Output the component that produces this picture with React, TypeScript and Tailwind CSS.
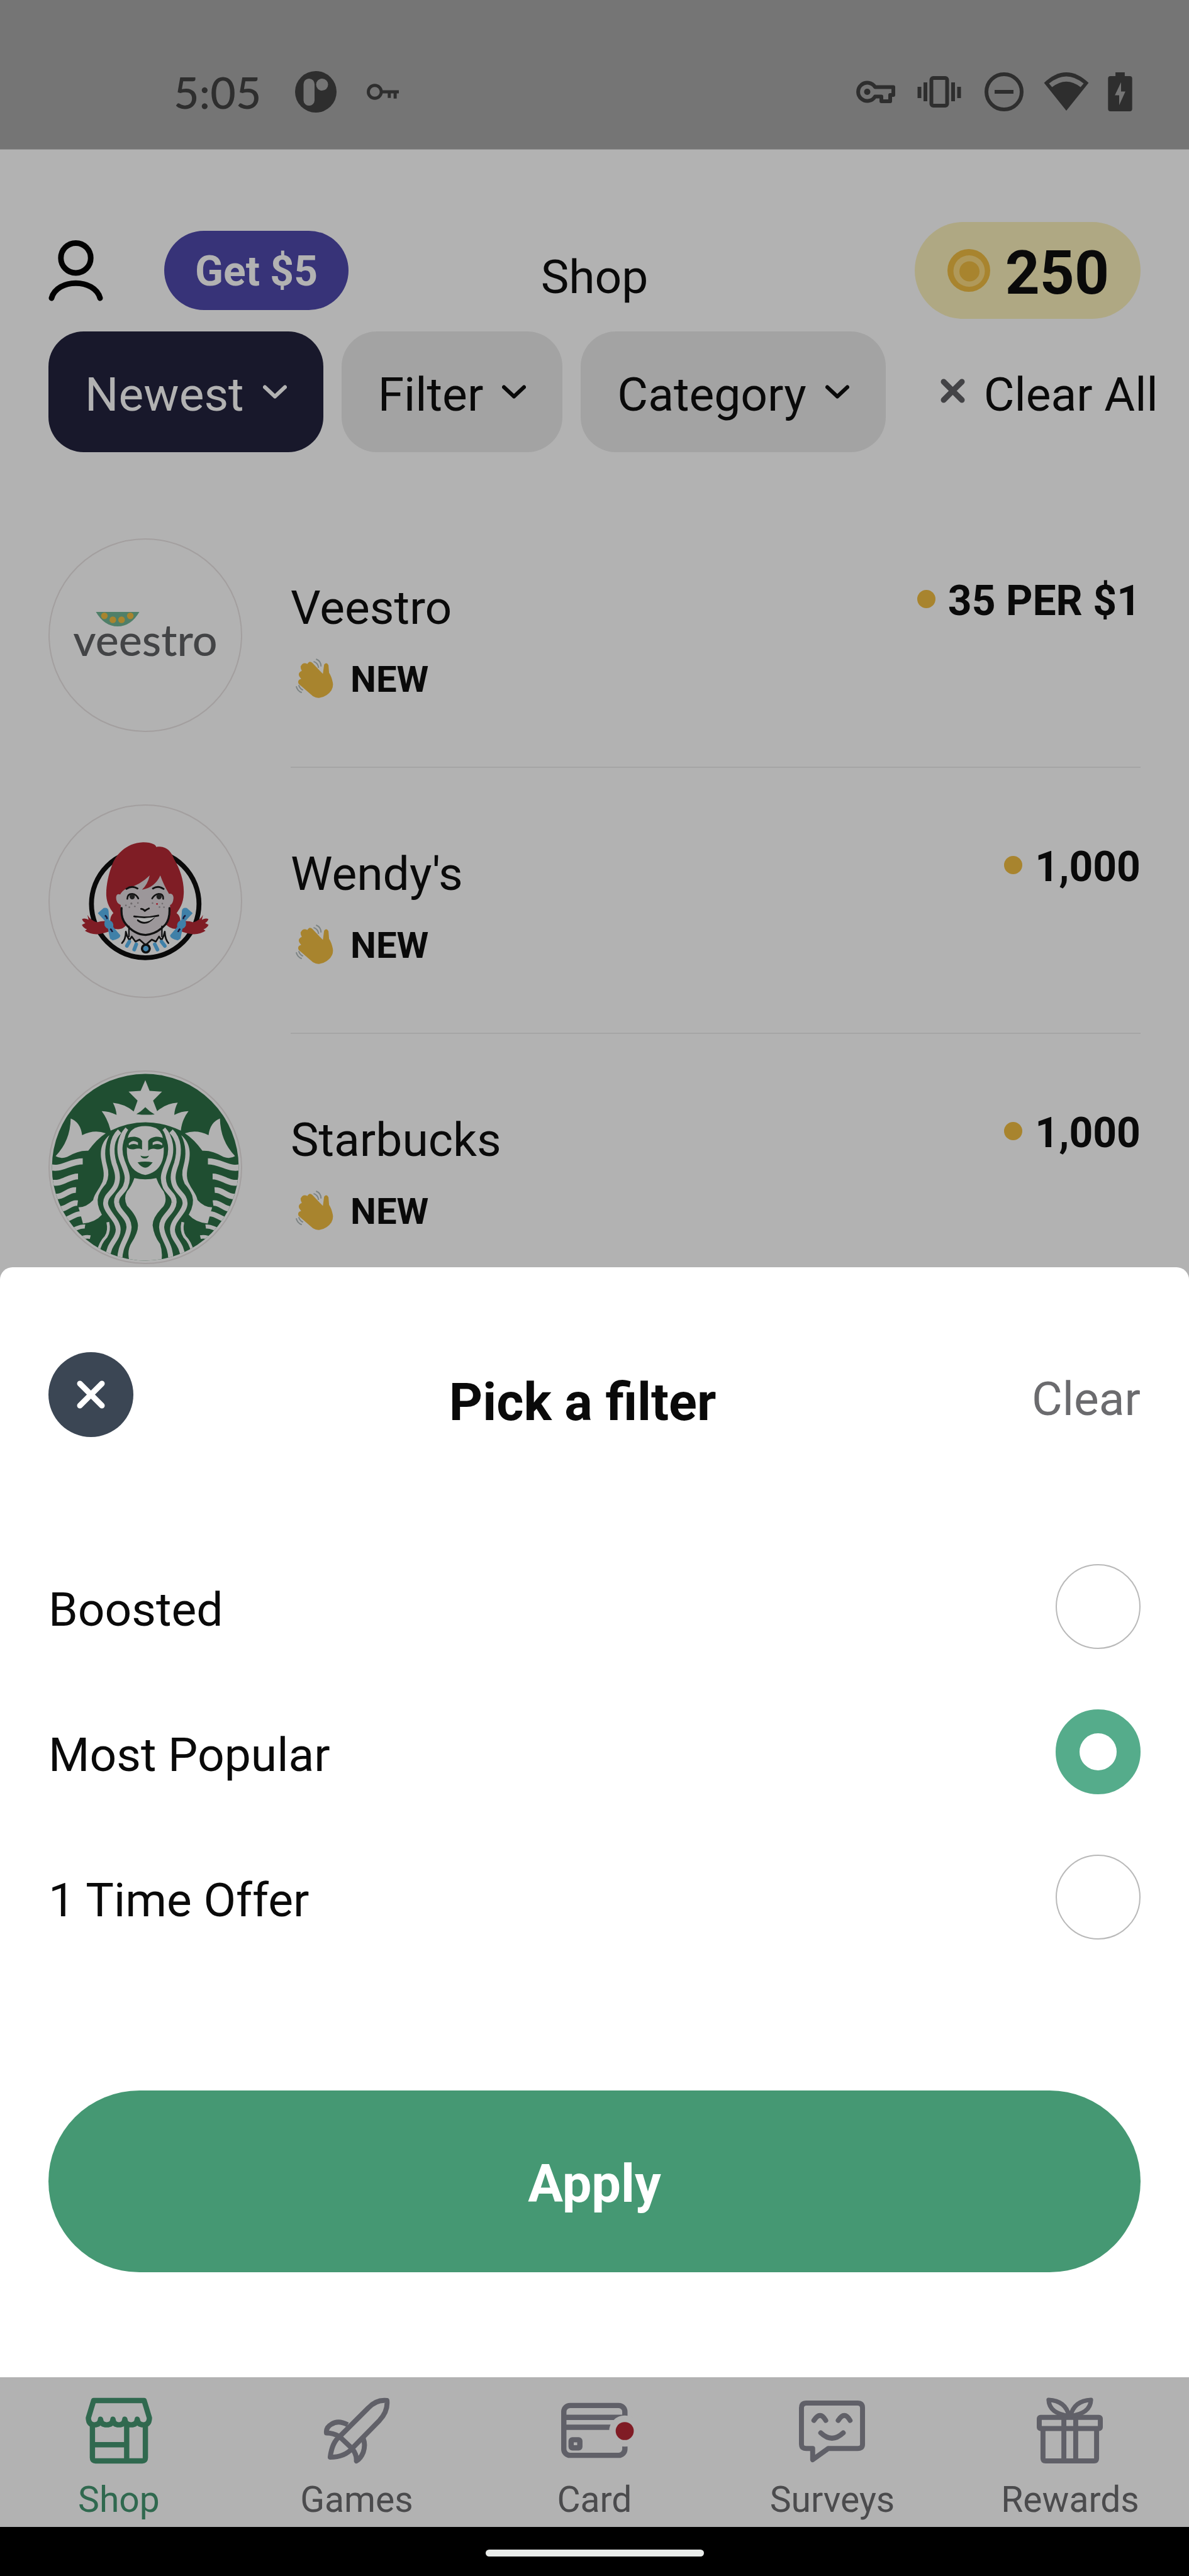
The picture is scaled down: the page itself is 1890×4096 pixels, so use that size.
import React, { useState } from 'react';

const offers = [
  { id: 'veestro', name: 'Veestro', reward: '35 PER $1', Logo: VeestroLogo },
  { id: 'wendys', name: "Wendy's", reward: '1,000', Logo: WendysLogo },
  { id: 'starbucks', name: 'Starbucks', reward: '1,000', Logo: StarbucksLogo },
];

const filters = ['Boosted', 'Most Popular', '1 Time Offer'];

const tabs = [
  { label: 'Shop', Icon: ShopIcon },
  { label: 'Games', Icon: RocketIcon },
  { label: 'Card', Icon: CardIcon },
  { label: 'Surveys', Icon: SurveyIcon },
  { label: 'Rewards', Icon: GiftIcon },
];

/* ---------- Status bar ---------- */

function StatusBar() {
  return (
    <div className="flex h-[238px] items-center justify-between border-b border-[#8e8e8e] bg-[#757575] pt-[54px] pr-[90px] pl-[276px] text-[#2e2e2e]">
      <div className="flex items-center">
        <span className="font-[Lato,sans-serif] text-[70px] leading-[80px] font-medium">5:05</span>
        <svg className="ml-[54px] size-[66px]" viewBox="0 0 66 66">
          <circle cx="33" cy="33" r="33" fill="currentColor" />
          <rect x="13.5" y="12" width="17.5" height="43" rx="8.7" fill="#757575" />
          <circle cx="43" cy="21.5" r="9.5" fill="#757575" />
        </svg>
        <svg className="ml-12 h-[26px] w-[51px]" viewBox="0 0 52 26" fill="none" stroke="currentColor" strokeWidth="5">
          <circle cx="13" cy="13" r="10.5" />
          <path d="M24 13H52M36.500 13V23M46 13V24" />
        </svg>
      </div>
      <div className="flex items-center gap-[30px]">
        <svg className="h-9 w-[62px]" viewBox="0 0 62 36" fill="none" stroke="currentColor" strokeWidth="6">
          <path d="M30 10.500H59V23H54V33H40V25.500H30A14.500 14.500 0 1 1 30 10.500Z" strokeLinejoin="round" />
          <circle cx="17.500" cy="18" r="5" fill="currentColor" stroke="none" />
        </svg>
        <svg className="h-[50px] w-20" viewBox="-6 0 80 50" fill="none" stroke="currentColor">
          <rect x="21.500" y="3" width="25" height="44" rx="3" strokeWidth="6" />
          <path d="M12 10V40M56 10V40M2.500 17V35M65.500 17V35" strokeWidth="6" />
        </svg>
        <svg className="h-[62px] w-[66px]" viewBox="-2 0 66 62" fill="none" stroke="currentColor" strokeWidth="6">
          <circle cx="31" cy="31" r="28" />
          <path d="M16 31H46" />
        </svg>
        <svg className="h-[61px] w-[72px]" viewBox="0 0 72 62">
          <path d="M0 17Q36 -17 72 17L36 62Z" fill="currentColor" />
          <path d="M8 18Q36 -5 64 18L59 24Q36 6 13 24Z" fill="#757575" />
        </svg>
        <svg className="h-[62px] w-[39px]" viewBox="0 0 39 63">
          <path d="M12 0H27V6H35Q39 6 39 10V59Q39 63 35 63H4Q0 63 0 59V10Q0 6 4 6H12Z" fill="currentColor" />
          <path d="M21 16L11 37H18V53L28 31H21Z" fill="#757575" />
        </svg>
      </div>
    </div>
  );
}

/* ---------- Header ---------- */

function Header() {
  return (
    <header className="grid grid-cols-[1fr_auto_1fr] items-center px-[77px] pt-[115px]">
      <div className="flex items-center gap-[97px]">
        <button type="button" aria-label="Profile">
          <svg className="h-[97px] w-[87px]" viewBox="0 0 88 98" fill="none" stroke="#020202" strokeWidth="9" strokeLinecap="round">
            <circle cx="44" cy="28.500" r="24" />
            <path d="M5 93C14 61 74 61 83 93" />
          </svg>
        </button>
        <button type="button" className="rounded-full bg-[#373378] px-[49px] pt-1 text-[66px] leading-[122px] font-bold text-[#b2b2b2]">
          Get $5
        </button>
      </div>
      <h1 className="pt-5 text-[75px] leading-[100px]">Shop</h1>
      <div className="flex h-[154px] items-center gap-6 justify-self-end rounded-full bg-[#afa883] pr-[50px] pl-[52px]">
        <svg className="size-[68px]" viewBox="0 0 68 68">
          <circle cx="34" cy="34" r="34" fill="#a8842e" />
          <circle cx="34.500" cy="35" r="25" fill="#b0995a" />
          <circle cx="35" cy="35.500" r="16" fill="#a8842e" />
        </svg>
        <span className="pt-2 text-[96px] leading-[112px] font-bold">250</span>
      </div>
    </header>
  );
}

function Chevron() {
  return (
    <svg className="mb-2 h-[23px] w-[38px]" viewBox="0 0 38 23" fill="none" stroke="currentColor" strokeWidth="6">
      <path d="M3 3.500L19 18.500L35 3.500" strokeLinecap="round" strokeLinejoin="round" />
    </svg>
  );
}

function FilterBar() {
  const chip = 'flex h-[192px] shrink-0 items-center gap-[30px] rounded-[56px] px-[58px] pt-2 text-[75px] leading-[100px]';
  return (
    <div className="mt-5 flex gap-[29px] overflow-hidden pl-[77px] whitespace-nowrap">
      <button type="button" className={`${chip} bg-[#18182b] text-[#b2b2b2]`}>
        Newest <Chevron />
      </button>
      <button type="button" className={`${chip} bg-[#a3a3a3]`}>
        Filter <Chevron />
      </button>
      <button type="button" className={`${chip} bg-[#a3a3a3]`}>
        Category <Chevron />
      </button>
      <button type="button" className={`${chip}`}>
        <svg className="mb-3 size-[39px]" viewBox="0 0 39 39" fill="none" stroke="#434346" strokeWidth="9" strokeLinecap="round">
          <path d="M5 5L34 34M34 5L5 34" />
        </svg>
        Clear All
      </button>
    </div>
  );
}

/* ---------- Offer list ---------- */

function VeestroLogo() {
  return (
    <div className="flex size-full items-center justify-center pb-3">
      <div className="text-[#434446]">
        <svg className="ml-9 h-[23px] w-[70px]" viewBox="0 0 72 24">
          <path d="M0 0H72Q58 24 36 24Q14 24 0 0Z" fill="#4f7f68" />
          <g fill="#a8842e">
            <circle cx="14" cy="6.500" r="5.500" />
            <circle cx="28" cy="13" r="5.500" />
            <circle cx="42.500" cy="13" r="5.500" />
            <circle cx="57" cy="6.500" r="5.500" />
          </g>
        </svg>
        <div className="font-[Lato,sans-serif] text-[70px] leading-[40px] font-medium">veestro</div>
      </div>
    </div>
  );
}

function WendysSide() {
  return (
    <g>
      <path d="M175 418Q120 408 92 420Q60 412 44 384L50 408Q32 398 18 404Q20 416 34 424L17 432Q24 448 42 454L32 462Q62 482 100 478Q150 470 178 450Z" fill="#7f1d25" />
      <path d="M95 375L124 350Q146 346 148 364L151 409Q176 418 171 443L206 484Q206 500 168 509L155 500L145 452Q120 440 130 413Z" fill="#3f80a8" />
      <path d="M130 386Q140 392 141 404M156 452Q165 458 167 468" stroke="#1b1838" strokeWidth="8" fill="none" />
    </g>
  );
}

function WendysLogo() {
  return (
    <svg className="size-full" viewBox="-141 -153 939 939">
      <circle cx="328" cy="330" r="264" fill="none" stroke="#0a0a0a" strokeWidth="24" />
      <path d="M318 27C365 28 380 40 382 50C430 42 455 70 470 110C500 160 520 220 517 280C515 330 495 355 482 375C505 388 500 425 502 448C475 458 445 452 420 420L240 425C225 455 190 460 165 448C152 430 152 390 172 375C155 350 140 330 137 290C135 250 145 190 165 140C180 95 230 30 318 27Z" fill="#7f1d25" />
      <WendysSide />
      <g transform="translate(656 0) scale(-1 1)">
        <WendysSide />
      </g>
      <path d="M250 425V492L282 510L304 516L328 528L352 518L376 508L408 490V425Z" fill="#9c979a" />
      <path d="M232 256Q300 240 350 190Q340 235 312 260Q375 250 402 190Q420 240 445 280Q465 275 467 300Q465 330 450 335Q455 400 430 430Q380 482 330 484Q275 475 228 425Q205 390 208 335Q185 325 185 300Q185 278 205 283Q215 265 232 256Z" fill="#9c979a" />
      <g fill="none" stroke="#111" strokeLinecap="round" strokeLinejoin="round">
        <path d="M212 350Q208 400 232 428Q275 480 330 482Q385 478 428 430Q450 400 447 350" strokeWidth="10" />
        <path d="M248 440V490M410 440V490" strokeWidth="7" />
        <path d="M214 522Q232 505 233 466Q238 490 250 508L262 490L280 515L300 505L330 532L360 505L380 515L396 490L408 508Q420 490 424 466Q426 505 442 522" strokeWidth="8" />
        <path d="M236 256Q262 238 290 254M366 254Q392 238 418 256" strokeWidth="9" />
        <path d="M240 305Q240 280 264 280Q285 282 294 303M416 305Q418 280 394 280Q372 284 362 303" strokeWidth="8" />
        <path d="M308 354Q318 354 326 364Q336 356 346 352" strokeWidth="9" />
        <path d="M274 391Q330 402 392 387M292 410Q330 440 370 396" strokeWidth="9" />
      </g>
      <path d="M284 396Q330 404 376 394Q350 418 326 418Q300 416 284 396Z" fill="#b2b2b2" />
      <circle cx="264" cy="294" r="13" fill="#222" />
      <circle cx="396" cy="294" r="13" fill="#222" />
      <g fill="#6f6a6c">
        <circle cx="233" cy="337" r="4" />
        <circle cx="260" cy="328" r="5" />
        <circle cx="292" cy="325" r="4" />
        <circle cx="250" cy="346" r="4" />
        <circle cx="277" cy="342" r="4" />
        <circle cx="364" cy="326" r="4" />
        <circle cx="412" cy="328" r="4" />
        <circle cx="398" cy="345" r="4" />
        <circle cx="420" cy="346" r="4" />
      </g>
      <circle cx="386" cy="330" r="4" fill="#a01020" />
      <path d="M250 515L238 536M284 528L274 554M375 528L388 554M408 515L424 536" stroke="#3f80a8" strokeWidth="18" strokeLinecap="round" />
      <circle cx="331" cy="549" r="19" fill="#3f80a8" stroke="#111" strokeWidth="11" />
    </svg>
  );
}

// One half of the siren, drawn twice with the second mirrored
function SirenHalf() {
  return (
    <g fill="#b2b2b2">
      <path d="M112 240Q160 258 168 322Q225 292 284 312Q240 340 198 398Q150 395 95 428Q62 440 38 424Q110 350 112 240Z" />
      <path d="M302 322C262 355 256 400 262 440C268 480 282 510 268 550C250 590 228 610 222 640Q190 675 150 676L158 702L172 755Q232 750 265 712Q235 660 248 618Q258 590 285 560Q306 520 290 470C276 420 278 370 302 322Z" />
      <g fill="none" stroke="#b2b2b2">
        <path d="M5 476C60 498 105 450 171 450" strokeWidth="30" />
        <path d="M10 552C70 568 95 524 148 524" strokeWidth="29" />
        <path d="M25 622C80 630 95 588 138 591" strokeWidth="28" />
        <path d="M50 684C90 690 110 650 146 655" strokeWidth="27" />
        <path d="M75 738C110 735 130 705 165 708" strokeWidth="25" />
        <path d="M110 785C140 788 150 765 182 770" strokeWidth="20" />
        <path d="M145 828C175 828 180 815 208 822" strokeWidth="18" />
        <path d="M352 302C312 340 308 400 325 460C340 500 348 530 335 565C320 605 283 615 283 655C283 700 345 735 345 785C345 835 298 850 294 920" strokeWidth="24" />
        <path d="M390 292C350 335 345 400 365 450C385 500 400 530 380 575C365 605 336 615 337 650C340 700 400 720 398 775C395 830 350 860 353 940" strokeWidth="25" />
        <path d="M294 748Q304 790 285 820Q255 850 247 895" strokeWidth="14" />
      </g>
    </g>
  );
}

function StarbucksLogo() {
  return (
    <svg className="size-full" viewBox="9 10 938 938">
      <clipPath id="disc">
        <circle cx="478" cy="479" r="458" />
      </clipPath>
      <g clipPath="url(#disc)">
        <rect x="9" y="10" width="938" height="938" fill="#1f4e31" />
        <SirenHalf />
        <g transform="translate(956 0) scale(-1 1)">
          <SirenHalf />
        </g>
        <path d="M478 52L499 104L560 108L516 152L536 204Q580 165 637 162Q622 190 620 222Q655 205 690 204Q658 245 652 299Q478 218 308 299Q295 245 264 204Q300 205 337 222Q334 190 319 163Q375 168 421 205L440 152L396 108L455 104Z" fill="#b2b2b2" />
        <path d="M434 218Q458 205 478 184Q500 207 524 220Q478 224 434 218Z" fill="#1f4e31" />
        <path d="M478 262Q395 262 378 330Q372 440 400 490Q430 540 478 540Q526 540 556 490Q584 440 578 330Q561 262 478 262Z" fill="#1f4e31" />
        <path d="M478 277Q402 278 392 335Q386 370 388 410Q395 500 478 517Q561 500 568 410Q570 370 564 335Q554 278 478 277Z" fill="#b2b2b2" />
        <path d="M388 337C415 324 450 328 462 350V392Q448 384 425 390Q402 394 388 380ZM568 337C541 324 506 328 492 350V398Q508 384 531 390Q554 394 568 380Z" fill="#1f4e31" />
        <path d="M397 362Q418 340 442 358V370Q420 358 397 372ZM561 362Q538 340 514 358V370Q536 358 561 372Z" fill="#b2b2b2" />
        <path d="M454 422Q475 430 496 422Q490 436 475 436Q460 436 454 422Z" fill="#1f4e31" />
        <path d="M440 455Q477 448 514 455Q495 481 477 481Q458 480 440 455Z" fill="#1f4e31" />
        <path d="M424 532Q478 545 532 532Q545 570 568 598Q588 640 566 672Q512 725 514 765Q520 815 550 855Q566 900 555 948H402Q385 890 410 850Q442 800 442 765Q440 720 388 668Q370 630 388 598Q412 570 424 532Z" fill="#b2b2b2" />
      </g>
    </svg>
  );
}

function WavingHand() {
  return (
    <svg className="size-[68px]" viewBox="-8 -2 69 69">
      <path d="M44 24L27 6Q22 2 19 8Q12 4 8 12Q8 16 10 19Q3 22 6 28L9 32Q2 34 5 40L28 60Q38 66 50 58Q62 50 60 38Q58 28 54 22L53 10Q50 4 46 9Z" fill="#a8842e" />
      <path d="M29 4Q36 6 37 14M33 0Q41 3 41 12M1 44Q3 52 10 54M5 42Q7 48 12 50" fill="none" stroke="#7d8484" strokeWidth="2" />
    </svg>
  );
}

function OfferRow({ offer }) {
  const { name, reward, Logo } = offer;
  return (
    <li className="group flex gap-[77px] px-[77px]">
      <div className="pt-[58px] pb-[57px] group-last:pb-0">
        <div className="size-[308px] overflow-hidden rounded-full border-2 border-[#a39f9f]">
          <Logo />
        </div>
      </div>
      <div className="flex flex-1 items-start justify-between border-b-2 border-[#a5a5a5] pt-[118px] group-last:border-0">
        <div>
          <h2 className="text-[75px] leading-[100px]">{name}</h2>
          <div className="mt-[29px] flex items-center gap-[27px] text-[58px] leading-[70px] font-bold">
            <WavingHand /> NEW
          </div>
        </div>
        <div className="flex items-center gap-5 text-[66px] leading-[80px] font-bold">
          <span className="mb-2 size-[29px] rounded-full bg-[#a8842e]" />
          {reward}
        </div>
      </div>
    </li>
  );
}

/* ---------- Filter sheet ---------- */

function FilterSheet() {
  const [selected, setSelected] = useState('Most Popular');

  return (
    <section className="mt-[5px] flex-1 rounded-t-[20px] bg-white px-[77px] pt-[135px] pb-40">
      <div className="flex items-center justify-between">
        <button type="button" aria-label="Close" className="flex size-[135px] items-center justify-center rounded-full bg-[#3b4654]">
          <svg className="size-[45px]" viewBox="0 0 45 45" fill="none" stroke="white" strokeWidth="9" strokeLinecap="round">
            <path d="M5 5L40 40M40 5L5 40" />
          </svg>
        </button>
        <h2 className="pt-6 text-[83px] leading-[100px] font-bold">Pick a filter</h2>
        <button type="button" className="pt-3 text-[75px] leading-[100px] text-[#6b6b6e]">
          Clear
        </button>
      </div>

      <div className="mt-[202px] flex flex-col gap-24">
        {filters.map((filter) => (
          <label key={filter} className="flex items-center justify-between">
            <span className="pt-2 text-[75px] leading-[100px]">{filter}</span>
            <input
              type="radio"
              name="filter"
              checked={selected === filter}
              onChange={() => setSelected(filter)}
              className="size-[135px] appearance-none rounded-full border-2 border-[#b9b9b9] bg-white checked:border-[38px] checked:border-[#55ac8b]"
            />
          </label>
        ))}
      </div>

      <button type="button" className="mt-60 h-[289px] w-full rounded-full bg-[#459873] pt-2 text-[83px] leading-[100px] font-bold text-white">
        Apply
      </button>
    </section>
  );
}

/* ---------- Tab bar ---------- */

function ShopIcon() {
  return (
    <svg className="size-[106px]" viewBox="0 0 107 107" fill="none" stroke="currentColor" strokeWidth="8.500" strokeLinejoin="round">
      <path d="M13 5H94L102.500 33Q102 44 93 44Q84 44 83 35Q82 44 73 44Q64 44 63 35Q62 44 53.500 44Q45 44 44 35Q43 44 34 44Q25 44 24 35Q23 44 14 44Q5 44 4.500 33Z" />
      <path d="M11 44V97Q11 102 16 102H91Q96 102 96 97V44M66 44V102M11 76H66" />
    </svg>
  );
}

function RocketIcon() {
  return (
    <svg className="size-[106px]" viewBox="0 0 107 107" fill="none" stroke="currentColor" strokeWidth="8" strokeLinejoin="round">
      <path d="M102 5Q85 3 72 17L26 63L46 82L90 37Q104 22 102 5Z" />
      <path d="M39 44Q24 36 13 43Q4 48 5 57Q16 57 26 63" />
      <path d="M64 66Q68 76 64 88Q60 98 53 102Q54 92 46 82" />
      <path d="M26 63Q14 72 11 96Q34 96 46 82" />
    </svg>
  );
}

function CardIcon() {
  return (
    <svg className="size-[106px] overflow-visible" viewBox="0 0 107 107" fill="none" stroke="currentColor" strokeWidth="8.500">
      <rect x="4.250" y="13" width="98" height="80" rx="10" />
      <path d="M4 32H102M4 48H102" />
      <rect x="16" y="68" width="14" height="13" rx="2" />
      <circle cx="102" cy="54" r="25" fill="#b2b2b2" stroke="none" />
      <circle cx="102" cy="54" r="14.500" fill="#801c25" stroke="none" />
    </svg>
  );
}

function SurveyIcon() {
  return (
    <svg className="size-[106px]" viewBox="0 0 107 107" fill="none" stroke="currentColor" strokeWidth="8" strokeLinejoin="round">
      <path d="M12 9H94Q102 9 102 17V75Q102 82 94 82H47L22 100V82H12Q4 82 4 75V17Q4 9 12 9Z" />
      <path d="M24 37Q34 21 43 37M63 37Q73 21 82 37M35 57Q53 74 71 57" strokeLinecap="round" />
    </svg>
  );
}

function GiftIcon() {
  return (
    <svg className="size-[106px]" viewBox="0 0 107 107" fill="none" stroke="currentColor" strokeWidth="8" strokeLinejoin="round">
      <rect x="4" y="32" width="98" height="18" rx="2" />
      <path d="M10 50V98Q10 102 14 102H92Q96 102 96 98V50M43.500 32V102M62.500 32V102" />
      <path d="M52 30Q20 26 19 4Q46 5 52 30ZM54 30Q60 5 87 4Q86 26 54 30Z" strokeWidth="7" />
    </svg>
  );
}

function TabBar() {
  return (
    <nav className="grid grid-cols-5 pt-[32px] pb-2">
      {tabs.map(({ label, Icon }, index) => (
        <a
          key={label}
          href={`#${label.toLowerCase()}`}
          className={`flex flex-col items-center gap-[22px] text-[57px] leading-[70px] ${index === 0 ? 'text-[#30694f]' : 'text-[#606068]'}`}
        >
          <Icon />
          <span className={index === 0 ? '' : 'text-[#4b4b4d]'}>{label}</span>
        </a>
      ))}
    </nav>
  );
}

export default function App() {
  return (
    <div className="flex min-h-screen flex-col bg-[#b2b2b2] font-[Roboto,sans-serif] text-[#0a0a0a]">
      <StatusBar />
      <Header />
      <FilterBar />

      <ul className="mt-[79px]">
        {offers.map((offer) => (
          <OfferRow key={offer.id} offer={offer} />
        ))}
      </ul>

      <FilterSheet />
      <TabBar />

      {/* Gesture bar */}
      <div className="flex h-[78px] items-center justify-center bg-black pt-1">
        <div className="h-[11px] w-[347px] rounded-full bg-[#e9ecea]" />
      </div>
    </div>
  );
}
